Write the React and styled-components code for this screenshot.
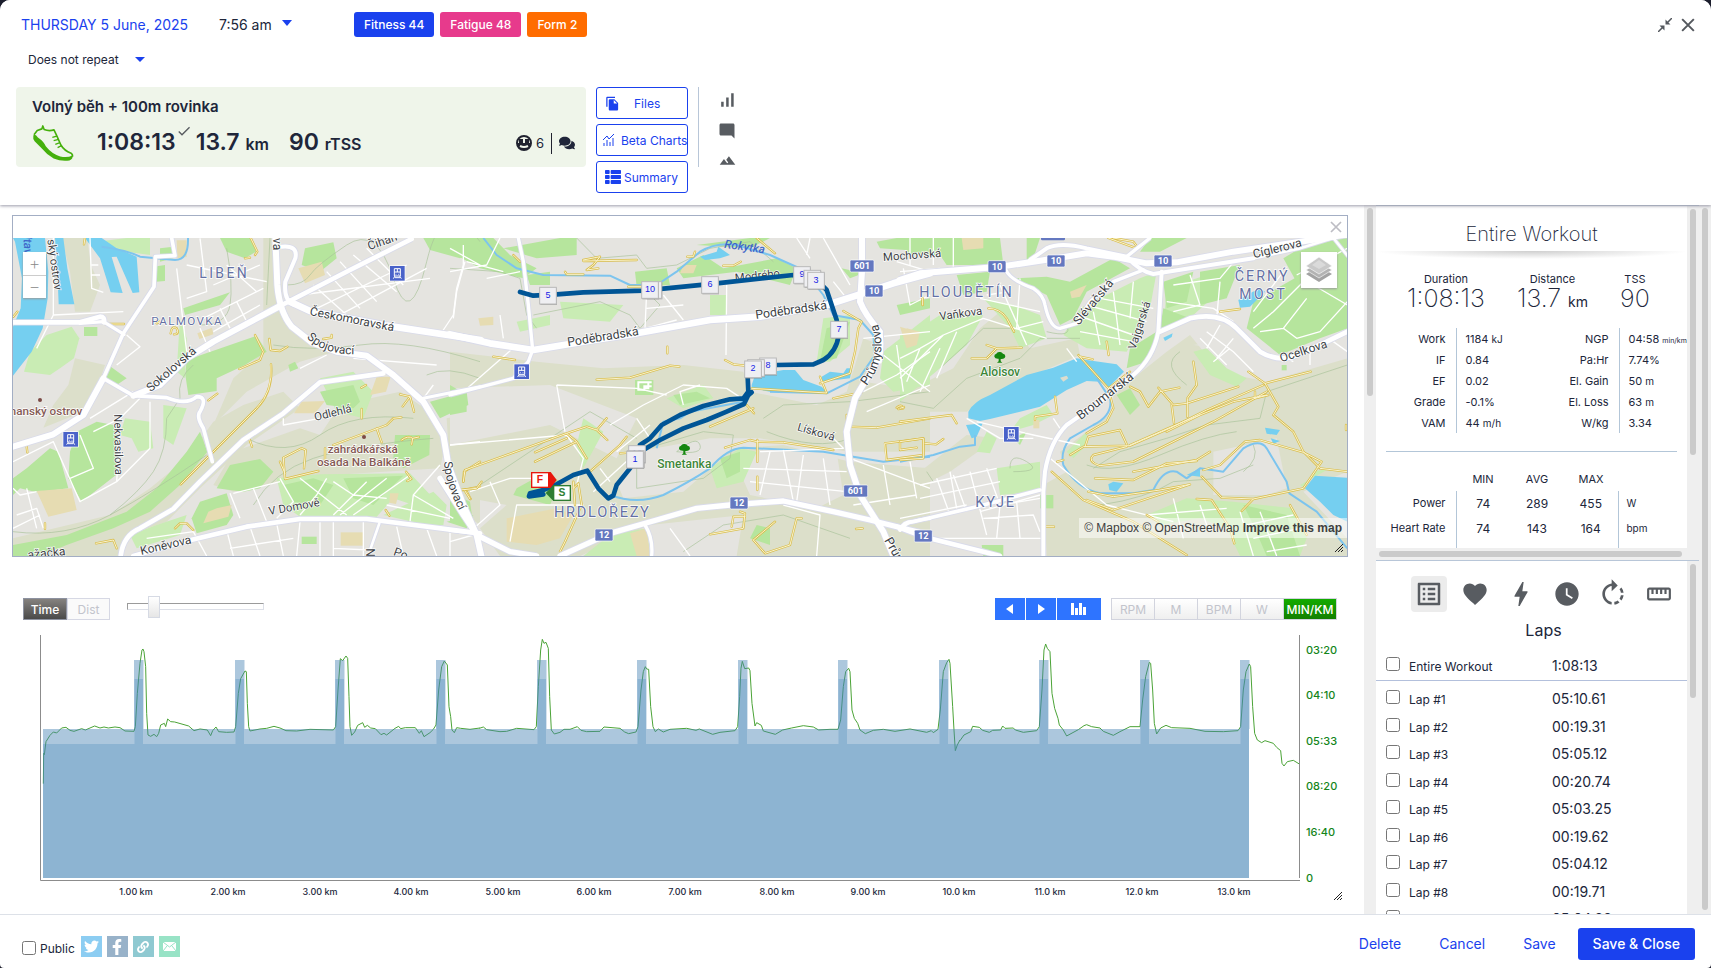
import { useState } from 'react'
import styled, { createGlobalStyle } from 'styled-components'
import {
  MdFileCopy,
  MdSignalCellularAlt,
  MdModeComment,
  MdLandscape,
  MdListAlt,
  MdFavorite,
  MdBolt,
  MdWatchLater,
  MdRotateRight,
  MdStraighten,
  MdCheck,
} from 'react-icons/md'
import { FaThList, FaComments, FaTwitter, FaFacebookF, FaLink } from 'react-icons/fa'

// Map geometry. The map is cut in three tiles, every tile has its own origin (x) and
// the same list of layers. Layers are drawn one by one over all the tiles.
const tiles = [
  {
    x: 0,
    hill: [
      'M185 99 H262 L272 180 L300 240 L270 320 L225 320 L210 200 Z',
      'M225 460 L315 480 L300 525 L250 620 L130 668 L160 600 L205 540 Z',
      'M39 1000 L330 930 L450 850 L560 760 L640 650 L730 600 L850 560 L900 610 L740 720 L600 850 L500 950 L400 985 L360 1053 H39 Z',
      'M700 740 L900 670 L960 690 L1020 600 L1200 560 L1290 620 L1340 700 L1320 790 L1150 800 L1000 810 L840 830 L700 860 L640 840 Z',
      'M1340 640 L1440 620 V960 L1400 930 L1350 800 Z',
      'M790 99 H830 L850 300 L900 400 L1040 430 L900 470 L740 560 L640 660 L700 520 L790 440 Z',
    ],
    lightPark: [
      'M72 500 L90 440 L140 390 L215 365 L238 400 L222 460 L180 490 L150 510 Z',
      'M375 640 L450 650 L460 730 L415 740 L395 700 L360 690 Z',
      'M540 340 L560 400 L555 520 L530 500 Z',
      'M290 110 L380 99 H450 V150 L380 140 Z',
      'M830 820 L960 808 L1230 805 L1300 880 L1240 900 L1180 880 L1130 935 L900 935 L850 900 Z',
      'M390 990 L470 960 L560 930 L540 990 L410 1030 Z',
      'M1150 930 L1300 860 L1340 900 L1330 960 L1280 960 Z',
      'M110 800 L180 780 L190 850 L120 860 Z',
      'M490 600 L560 610 L520 720 L490 700 Z',
      'M960 520 L1060 500 L1120 560 L1090 640 L1010 620 Z',
    ],
    park: [
      'M560 465 L770 392 L800 440 L735 480 L650 520 L650 558 L565 570 L556 510 Z',
      'M660 99 H755 L768 140 L735 160 L680 140 Z',
      'M460 185 L495 180 L495 228 L468 230 Z',
      'M252 366 h40 v27 h-40 Z',
      'M39 820 L80 790 L150 730 L175 740 L205 850 L110 862 L60 850 L39 870 Z',
      'M210 740 L230 680 L290 650 L340 660 L350 700 L348 810 L245 890 L205 820 Z',
      'M39 1020 L200 990 L380 920 L470 850 L560 740 L600 680 L622 740 L540 840 L450 920 L340 970 L200 1020 L120 1053 H39 Z',
      'M690 780 L780 762 L820 800 L780 850 L730 860 L650 850 Z',
      'M575 940 L600 890 L680 865 L700 930 L680 960 L590 985 Z',
      'M850 840 L940 820 L1000 840 L960 900 L880 890 Z',
      'M1030 820 L1210 812 L1160 860 L1120 900 L1060 880 Z',
      'M550 310 L690 262 L660 300 L555 330 Z',
      'M915 130 L1000 112 L1010 160 L960 200 L905 180 Z',
      'M1270 99 H1440 V130 L1380 160 L1290 135 Z',
      'M960 560 L1060 540 L1080 590 L1060 610 L980 600 Z',
      'M1185 690 L1290 690 L1288 750 L1210 790 L1180 760 Z',
      'M1290 590 L1400 560 L1405 600 L1320 640 Z',
      'M325 480 L380 520 L350 540 L315 520 Z',
      'M865 480 L885 470 L895 490 L870 500 Z',
      'M905 995 h45 v22 h-45 Z',
      'M1340 950 L1420 930 L1400 970 Z',
      'M480 130 L520 125 L520 160 L480 170 Z',
    ],
    sand: [
      'M110 858 L215 850 L230 915 L145 935 Z',
      'M895 190 L965 170 L975 210 L915 235 Z',
      'M592 385 L636 368 L640 388 L598 402 Z',
      'M1130 515 L1172 515 L1158 560 L1110 570 Z',
      'M905 590 L975 588 L945 625 L882 625 Z',
      'M1022 982 h68 v40 h-68 Z',
      'M530 106 h30 v50 l-28 4 Z',
      'M650 910 L695 900 L685 935 L610 955 L625 920 Z',
      'M1170 865 l26 0 l-8 32 l-20 -4 Z',
    ],
    water: [
      'M39 99 H135 L145 200 L143 280 L128 370 L95 440 L39 512 V365 L62 310 L66 220 L45 110 Z',
      'M165 99 H190 L202 190 L223 298 H176 L172 200 Z',
      'M255 99 H305 L350 130 L410 155 L418 262 L398 264 L350 155 L335 156 L368 264 L332 262 L300 160 Z',
    ],
    stream: ['M305 125 Q380 135 420 155 L525 165 Q566 165 564 99'],
    path: [
      'M580 480 Q530 520 540 580 L500 640 Q500 740 460 800 T330 930',
      'M680 130 Q700 240 690 300 T600 360',
      'M860 240 Q910 240 930 210 T1040 120 T1180 220 T1280 170 T1440 110',
      'M1280 510 Q1340 480 1440 520',
      'M740 700 Q860 760 960 690 T1240 640',
      'M39 980 Q200 1000 330 930 T620 750',
      'M760 900 Q820 800 940 760 T1300 700',
      'M800 300 L810 99 M820 420 Q940 440 1080 420 T1440 470',
    ],
    street: [
      'M160 330 L370 320 M160 99 V330 L110 430 M270 99 L275 250 L310 262',
      'M275 180 L295 180 M275 210 L300 210 M530 190 L560 440',
      'M560 180 L800 230 M600 100 L620 260 L560 280 M680 180 L770 260 M640 240 L780 180',
      'M610 340 L790 250 M640 380 L780 300 M600 370 L630 440 M660 310 L690 370 M710 290 L740 350',
      'M940 240 L1040 330 M980 200 L1080 310 M1020 170 L1130 290 M1060 150 L1190 260 M1100 130 L1210 240',
      'M930 320 L1220 180 M900 270 L1290 220 M1000 340 L1280 190',
      'M1390 120 V180 L1370 250 L1360 330 M1360 330 L1320 390',
      'M270 640 L400 560 M280 680 L360 640 L420 580 M380 390 L420 425 L350 480',
      'M39 770 L160 710 L240 890 L350 830 L360 680 M240 690 L280 790 L210 820 M350 830 L450 730 L450 590',
      'M39 850 L60 870 L110 860 M50 930 L110 910 L130 970 M39 970 L120 930 M80 850 L110 970',
      'M850 640 V660 L960 640 M1060 460 L1310 480 M900 490 L980 450',
      'M690 865 L720 940 M700 865 L840 830 M760 850 L800 950 M840 820 L880 890 L830 940',
      'M900 820 L1040 930 M980 820 L950 870 L900 930 M1000 830 L1060 870 L1160 880 M1100 830 L1000 930',
      'M1160 820 L1020 930 M1230 810 L1060 930 M1320 780 L1240 870 L1360 940 M1160 900 L1350 940 M1240 870 L1230 950',
      'M440 1000 L580 980 L620 1053 M680 975 L700 1053 M750 965 L780 1053 M830 955 L850 1053 M900 950 L890 1053 M690 1030 L880 1000 M960 945 V1053 M1000 945 V1053 M1090 945 V1053 M1000 1030 L1110 1035 M1190 965 L1210 1053 M1280 970 L1310 1053 M1350 980 V1053',
      'M1350 720 L1440 710 M1270 580 L1300 540',
    ],
    track: [
      'M765 390 L790 440 L780 465 L718 492 M808 402 L812 435 L840 438 L862 425',
      'M813 478 Q820 560 770 610 L650 730 L542 838 M625 586 L652 566',
      'M1000 720 L1160 660 L1180 640 L1204 637 M1130 670 L1145 712 M975 730 V780 M1085 612 V640',
      'M850 758 L905 730 L917 735 L912 790 M850 760 L855 822 L955 798 M855 805 L840 770 M1205 705 Q1225 690 1238 700 L1235 718 M1238 700 L1256 696',
      'M1200 568 L1230 575 L1242 620 M1230 575 L1208 604 M1390 830 L1392 800 L1440 770 M1375 858 L1440 845 M1400 860 L1412 882',
      'M255 99 L252 118 M752 99 L772 140 L765 150 M735 160 L750 158',
      'M288 1015 L340 1005 L350 1030 M525 970 L540 955 L560 955 L580 975 M80 725 L82 742 M315 357 H372 M470 355 L480 350 M40 335 L52 320 M512 385 Q515 360 530 370 Q540 388 522 388 M970 402 L995 398 L995 390 M748 702 L756 725 M1218 800 L1234 822 L1222 828 M1157 915 L1168 932 M135 955 V972 M1084 548 L1098 540',
    ],
    road: [
      [14, 'M39 352 H240 L300 335 Q315 335 312 352'],
      [10, 'M240 355 L310 350 L372 388'],
      [18, 'M39 725 L160 688 L250 630 L310 520'],
      [11, 'M310 520 L370 385 L462 245 L466 155 L525 152 L515 99'],
      [11, 'M310 520 L400 572 L500 578 Q560 602 590 575 Q625 575 600 620 Q588 635 610 670 L637 770'],
      [18, 'M400 572 L480 540 L560 460 L640 410 L840 303'],
      [14, 'M840 303 L1050 195 L1235 102'],
      [18, 'M826 99 L832 240 Q838 320 875 365 L935 412 L1010 440 L1100 452 L1180 510 L1270 590 L1330 690 L1345 780 L1390 900 L1430 990 L1444 1053'],
      [12, 'M845 125 Q895 120 886 160 L856 230 Q850 290 885 300'],
      [20, 'M870 290 L930 318 L1160 362 L1442 405'],
      [14, 'M362 1053 Q370 990 420 970 L520 912 L600 830 L730 705 L850 625 L960 532 L1150 505'],
      [14, 'M400 1053 L560 1008 L740 965 L900 942 L1100 942 L1440 985'],
      [9, 'M1270 580 L1440 545'],
      [8, 'M1138 955 L1112 1030'],
    ],
  },
  {
    x: 1350,
    hill: [
      'M0 440 L260 470 L460 490 L700 480 L880 500 L900 560 L1100 600 L1190 560 L1240 400 L1290 420 L1240 530 L1440 560 V740 L1200 740 L930 700 L780 700 L560 740 L500 830 L520 880 L700 860 L850 730 L1000 720 L1200 770 L1440 790 V1053 H860 L880 930 L600 960 L390 1053 H150 L90 970 L170 900 L60 880 L0 760 Z',
      'M160 940 L320 900 L390 920 L330 1020 L180 1000 Z',
    ],
    land: [
      'M0 550 L300 540 L560 640 L500 760 L300 660 L0 720 Z',
      'M930 730 L1160 740 L1180 870 L1100 910 L900 870 L860 780 Z',
      'M610 990 L700 960 L760 1053 H610 Z',
    ],
    lightPark: [
      'M200 350 L300 330 L300 360 L210 380 Z',
      'M1300 440 L1440 330 V540 L1330 560 L1290 520 Z',
      'M330 290 L520 300 L480 350 L340 340 Z',
      'M780 270 h50 v60 h-50 Z',
      'M400 640 L460 680 L400 790 L380 720 Z',
      'M1120 340 L1200 330 L1200 420 L1140 470 L1100 470 Z',
      'M480 990 L590 970 L600 1053 H400 Z',
      'M1310 430 L1440 400 V440 L1320 470 Z',
      'M870 730 L920 740 L880 830 L800 850 L780 790 Z',
      'M650 580 L760 540 L790 580 L700 610 Z',
    ],
    park: [
      'M0 99 H130 L180 150 L260 190 L220 220 L90 190 L0 140 Z',
      'M160 130 L330 99 H380 V150 L260 160 Z',
      'M555 200 L650 190 L660 240 L560 245 Z',
      'M680 190 L760 150 L820 190 L980 160 L1040 190 L1020 240 L860 200 L700 220 Z',
      'M740 120 L900 99 H960 L900 130 Z',
      'M1280 110 L1340 99 H1440 V140 L1290 130 Z',
      'M1175 190 L1240 205 L1200 220 Z',
      'M555 525 h55 v45 h-55 Z',
      'M0 540 L50 570 L50 620 L0 630 Z',
      'M810 760 L870 740 L870 800 L830 820 Z',
      'M200 850 L290 800 L330 830 L300 900 L190 870 Z',
      'M1130 370 L1200 350 L1160 460 L1110 470 Z',
      'M220 980 L270 940 L310 990 L260 1010 Z',
      'M0 860 L60 890 L70 960 L0 950 Z',
      'M920 960 L960 970 L960 1020 L900 1000 Z',
      'M670 570 L740 560 L780 580 L690 600 Z',
      'M1340 300 L1440 280 V310 L1350 330 Z',
      'M230 210 L300 200 V240 L240 240 Z',
    ],
    sand: [
      'M170 940 L320 910 L370 930 L330 1000 L260 1020 L170 1010 Z',
      'M1350 365 L1400 380 L1400 420 L1370 430 Z',
      'M540 985 L590 970 L600 1053 H560 Z',
      'M85 340 L130 335 L130 360 L90 362 Z',
      'M700 180 L740 180 L730 205 L690 205 Z',
    ],
    water: [
      'M905 540 L915 510 L1000 495 L1035 495 L1060 525 L1115 545 L1130 560 L960 560 L905 550 Z',
      'M1115 515 L1140 500 L1180 505 L1190 490 L1206 490 L1200 520 L1115 530 Z',
      'M750 155 L800 140 L805 125 L840 150 L810 160 L765 165 Z',
    ],
    stream: [
      'M100 99 L140 150 L200 190 L280 210 L480 212 L540 240 L620 240 L680 200 L750 140 Q800 110 860 120 L960 150 L1060 195 L1120 270 L1150 330 L1230 345 L1270 390 L1275 450 L1230 515 L1130 565 L960 560',
      'M620 730 L640 650 L690 640 L720 620 L880 590',
      'M480 870 Q560 900 640 870 Q720 830 780 790 Q830 730 880 728 L1120 740 L1300 770 L1440 755',
    ],
    path: [
      'M380 99 L440 160 L560 150 L590 190 L680 180 L780 130 L900 110 L970 170',
      'M0 190 L150 200 L210 220 L230 330 L260 370',
      'M250 330 L450 290 L540 330 L570 370 L630 300 L600 270',
      'M560 780 L590 730 L760 680 L850 690 L840 760 L760 820 L560 850 Z',
      'M60 860 L300 700 L420 620 L560 700',
      'M940 640 L1000 600 L1200 590 L1440 560 M950 680 Q1100 740 1200 700',
      'M680 740 Q740 690 750 720 T680 740',
      'M700 1040 L820 960 L1000 930 L1200 1000',
    ],
    street: [
      'M0 130 L90 180 M0 200 L110 180 L150 99 M150 330 L160 400 M110 220 L210 200',
      'M45 170 L20 260 L10 340 M50 170 L160 200 M590 260 L585 370 L680 345 M590 310 L700 300 M640 270 L700 345',
      'M830 240 L828 450 M1040 99 L1080 160 M1080 99 L1070 150 M1120 99 L1200 240 M1150 230 L1190 280',
      'M1340 170 L1440 200 M1360 190 L1380 300 L1440 270 M1240 400 L1440 380',
      'M320 540 L345 680 M320 540 L560 550 L650 570 M0 720 L350 690 M350 690 L400 760 L380 840',
      'M480 660 L580 600 L700 540 L830 550 L890 590 M600 700 L560 640 M500 740 L600 660 M700 600 L690 560 L750 540',
      'M60 860 L180 820 L260 820 M120 830 L150 900 L60 980 M0 1010 L70 990 M180 1010 L200 900 L400 900',
      'M930 740 L1180 730 L1150 700 M960 740 L930 870 M1000 735 L1030 890 M1060 750 L1040 890 M900 830 L1190 860 M1120 760 L1140 900 M880 790 L1190 800',
      'M1240 560 L1340 510 L1440 440 M1250 620 L1440 540 M1210 900 L1400 870 M1300 780 L1320 900 M1380 770 L1400 880',
      'M660 970 L720 1053 M1000 900 L1110 930 L1100 1053 M1200 760 L1440 850',
      'M450 790 L480 830 M430 860 L540 760',
      'M200 420 L40 560 M1300 450 L1440 560 M1340 420 L1360 560',
    ],
    track: [
      'M190 150 L210 170 M400 165 L450 155 L430 180 L410 195 L445 190 M400 168 L560 165',
      'M345 200 L350 208 L400 208 M535 245 H575 M920 99 L975 145 M735 140 L730 155 L712 155 M820 182 L850 182 L872 170',
      'M130 455 L195 465 M440 524 L540 518 L660 482 L688 485 M825 465 L850 478 L885 482 M652 425 V445',
      'M905 550 L1130 564 L1110 515 M1110 535 L1200 505 L1215 440 L1225 370 L1235 350 L1180 318 M1150 580 L1235 562',
      'M40 830 L45 795 L350 685 L410 665 L440 675 L470 640 M440 675 L472 705 M255 770 L380 710 L350 685 M255 742 L350 700 M380 710 L410 760',
      'M30 855 L80 850 L95 830 M45 858 L60 882 M370 850 L385 835 L395 900 L345 1010 L330 1040 M420 800 L510 720 L530 695 M510 745 L570 740',
      'M370 830 L375 900 M780 665 L910 610 M890 600 L912 625 M1190 630 L1192 665 L1280 668 L1440 640',
      'M825 728 L900 705 L920 710 L1000 712 L1150 735 M922 705 V770 M922 815 V855 M1305 715 L1420 700 V750 L1310 765 Z M1350 710 V735 L1400 728',
      'M780 988 L880 970 L885 925 L870 920 M845 965 L850 935 L885 935 M910 1005 L975 950 M910 1005 L945 1045 L1020 1020 L1040 940 L1055 940 M1340 608 Q1355 595 1360 610 L1345 612 M1218 972 L1238 970 M1418 282 V300',
    ],
    road: [
      [20, 'M-2 388 L120 415 L250 435 L400 410 L560 385 L780 345 L930 335 L1130 300 L1230 268 L1330 235 L1440 205'],
      [18, 'M1236 99 V200 L1230 290 Q1245 330 1290 380 L1280 470 L1215 580 L1190 680 L1200 780 L1230 870 L1300 980 L1330 1053'],
      [10, 'M205 99 L220 170 L235 300 L248 435 L235 470 L190 520 L0 570'],
      [16, 'M-30 820 L40 930 L80 990 L180 1040 L260 1053 M330 1053 L480 985 L620 945 L740 910 L840 900 L1000 888 L1150 920 L1260 945 L1440 990'],
      [12, 'M0 975 L80 985'],
      [10, 'M585 960 Q610 1000 605 1053 M1360 970 Q1360 950 1440 940'],
      [11, 'M1290 380 Q1300 410 1290 470'],
    ],
  },
  {
    x: 2700,
    hill: [
      'M0 570 L160 490 L240 370 L300 320 L390 430 L530 400 L540 450 L330 540 L200 620 L0 620 Z',
      'M700 520 L800 440 L870 390 L960 500 L1100 530 L1342 460 V800 L1270 830 L1210 860 L1342 1000 V1053 H440 L430 840 L500 800 L480 740 L560 680 L640 620 L640 560 Z',
      'M60 800 L200 690 L290 700 L150 800 L90 830 Z',
    ],
    land: [
      'M560 560 L620 600 L600 640 L520 660 L460 700 L440 720 L420 800 L300 690 L240 650 L440 600 Z',
      'M880 420 L1040 400 L1140 480 L1340 450 V420 L1200 450 Z',
      'M940 740 L1130 700 L1160 850 L1100 870 L940 870 Z',
    ],
    lightPark: [
      'M0 390 L60 370 L120 330 L250 330 L200 420 L120 490 L0 590 Z',
      'M490 390 L540 310 L720 220 L770 200 L750 310 L680 440 L560 430 Z',
      'M880 440 L920 430 L980 490 L1040 520 L1010 545 L930 510 Z',
      'M360 640 L440 600 L460 630 L400 660 L330 680 Z',
      'M230 740 L260 680 L290 700 L270 745 Z',
      'M290 790 L420 770 L420 860 L300 870 Z',
      'M500 740 L560 680 L560 720 L520 760 Z',
      'M740 930 L860 880 L1000 890 L1180 910 L1220 1000 L1200 1053 H1020 L980 970 L900 940 L780 960 Z',
      'M800 250 L920 210 L980 240 L880 330 L790 370 Z',
      'M1215 850 L1240 800 L1290 790 L1200 840 Z',
      'M250 280 L340 300 L420 330 L440 400 L360 430 L330 370 Z',
    ],
    park: [
      'M0 110 L80 99 H300 L310 180 L140 180 L120 150 L30 150 Z',
      'M380 99 H420 L400 160 L380 165 Z',
      'M170 210 L270 200 L260 260 L190 270 Z',
      'M340 220 L440 215 L510 230 L640 160 L690 190 L560 260 L520 340 L480 360 L440 270 Z',
      'M750 99 H860 L780 140 L720 140 Z',
      'M790 230 L880 200 L860 290 L800 310 Z',
      'M900 200 L1020 180 L980 280 L900 300 Z',
      'M1060 290 L1342 130 V370 L1260 400 L1140 450 L1040 370 Z',
      'M1150 160 L1250 99 H1342 V140 L1200 250 Z',
      'M690 430 L770 380 L740 470 L680 490 Z',
      'M790 310 L870 340 L780 370 Z',
      'M650 570 L690 550 L720 600 L690 630 Z',
      'M1030 900 L1160 930 L1200 1053 H1100 L1060 960 Z',
      'M245 1020 L310 1020 V1053 H250 Z',
      'M420 870 h40 v40 h-40 Z',
      'M1145 480 h15 v16 h-15 Z',
      'M340 700 L380 680 L360 720 Z',
    ],
    sand: [
      'M185 99 H250 V130 L190 135 Z',
      'M20 370 L60 380 L50 420 L20 425 Z',
      'M510 260 L560 240 L540 275 L515 280 Z',
      'M400 645 h18 v25 h-18 Z',
    ],
    water: [
      'M205 620 Q220 590 270 570 L380 510 L460 488 L530 460 L560 465 L650 478 L672 500 L625 548 L600 530 L560 528 L500 555 L420 605 L360 620 L270 642 L240 648 L205 640 Z',
      'M198 660 L248 655 L230 695 L215 700 Z',
      'M1215 850 L1245 812 L1342 818 V950 L1300 930 L1260 890 Z',
      'M625 838 L640 830 L670 835 L650 860 L628 855 Z',
      'M1015 285 L1050 265 L1080 250 L1095 260 L1050 305 L1020 308 Z',
      'M1095 668 L1140 675 L1130 690 L1100 686 Z M1112 700 L1140 708 L1120 716 Z',
      'M790 398 L818 385 L815 396 L795 408 Z',
      'M860 810 L900 790 L900 815 Z',
    ],
    stream: [
      'M590 520 L630 580 Q640 630 580 660 L510 700 Q480 740 490 780 Q530 850 600 865 L700 865 L760 855 Q790 790 830 800 L860 820 L900 790 L970 800 L1030 730 Q1080 700 1100 730 L1160 830 L1168 865 L1250 920 L1342 1030',
      'M0 770 L100 750 L180 725 L225 720 L225 690',
    ],
    path: [
      'M0 590 L100 610 L200 520 L360 460 L420 400 L540 400',
      'M120 490 L250 370 L330 370 M440 380 Q520 400 500 360',
      'M580 790 L660 740 L800 700 L920 660 L1080 640 L1100 560 L1342 480',
      'M560 780 Q640 810 780 750 T1010 680',
      'M1030 800 Q1080 760 1060 720 M860 540 Q780 480 840 440',
      'M600 900 Q740 880 820 830 L960 820 L1060 780',
      'M330 790 Q330 740 380 770 T340 800 M80 800 L100 830',
    ],
    street: [
      'M0 460 L60 430 L130 390 L250 340 M20 530 L60 430 M60 560 L120 430 M110 520 L170 380 M0 520 L130 390',
      'M240 280 L420 320 M250 340 L440 400 M300 240 L380 420 M260 270 L330 260 M360 220 L350 370 L430 350',
      'M530 330 L700 390 M540 380 L700 410 M560 300 L740 350 M600 280 L760 310 M580 320 L600 420 M640 260 L660 420 M700 230 L690 340',
      'M820 240 L960 220 L1010 160 M870 210 L900 300 L820 320 M800 290 L940 310 L1000 350 M960 230 L950 340',
      'M1060 370 L1120 320 L1240 200 M1080 380 L1150 370 L1220 280 M1060 320 L1150 200 M1150 370 L1190 400 L1260 380 L1342 290 M1240 240 L1342 300 M1190 210 L1342 130',
      'M920 380 L1000 440 L1060 500 M900 400 L980 480 M960 360 L920 430 M1000 400 L950 460 M940 470 L990 430',
      'M60 840 L290 790 M60 880 L300 830 M110 820 L150 930 M160 810 L200 920 M210 800 L260 990 M0 940 L200 900 M260 790 L300 900 L420 880 M150 800 L170 910 M240 920 L420 870 M250 940 L400 930 L420 980 M300 900 L290 1000 M350 890 L360 1000 M80 1000 L430 1000',
      'M740 930 L980 910 M820 880 L850 1000 M900 900 L920 960 M1020 920 L1060 1053 M1080 920 L1130 1053 M1040 960 L1180 930 M1060 1000 L1200 970 M1100 1040 L1220 1020',
      'M200 640 L300 700 L400 700 M0 200 L120 190 M100 99 V180 M160 99 V190 M30 99 V180 M530 470 L500 430',
      'M1140 450 L1180 470 M1300 410 L1342 440 M1230 430 V480 M540 720 L400 690 L230 650 M460 640 L480 670',
      'M450 760 L620 900 L820 950',
    ],
    track: [
      'M265 310 Q300 310 320 340 L342 380 M215 460 L260 460 L290 430 L365 428 M260 420 L290 430 L270 450',
      'M535 450 L625 550 L690 500 M540 455 L578 463 M620 410 L626 450 M960 320 L1020 312 M625 550 L640 610 L620 650 L560 685',
      'M690 545 L720 560 L745 605 L780 560 L838 548 M775 548 L820 600 L860 595 L1015 545 M815 600 L822 655 M880 470 L890 540 L862 580 V635',
      'M1045 500 L1095 535 L1232 500 M1095 535 L1135 605 L1120 630 L1180 680 L1210 740 L1260 790 L1342 800 M1065 560 V580 L1105 570',
      'M510 750 L550 725 L690 722 L820 665 L920 615 L1090 540 M690 720 L850 650 L1000 590 L1100 570 M555 725 L565 695 L660 675 L680 718',
      'M930 740 L890 765 L700 800 M800 680 L900 630 M1100 560 L940 650 L700 770 L600 782 Q560 770 580 750 L680 725',
      'M585 820 L700 825 L800 775 L890 768 M455 800 L550 885 L700 950 L860 1050 M565 860 L640 875 L780 855 L870 838 M560 885 L640 915 L870 838',
      'M905 815 L965 878 L1060 882 L1210 850 L1265 770 L1210 742 L1080 705 L1035 710 L960 780 L910 795 M890 882 L935 885 L990 970 L1003 1015 M1025 918 L1060 882 M1170 900 L1220 990',
      'M740 930 L775 950 M438 965 L462 965 M0 650 L155 630 L170 655 M0 710 L70 700 V760 L0 765 M75 715 L108 718 L130 702 M465 575 L472 625 L405 635 V645 M0 610 L12 606 M68 280 V300 M625 99 L710 130 M640 99 L700 110 L715 130 M472 770 L490 765 M1338 660 V675',
    ],
    road: [
      [18, 'M-2 225 L60 205 L300 185 L390 172 L470 160 L560 145 L640 155 L740 175 L830 172 L1000 140 L1250 103 L1342 88'],
      [12, 'M390 165 L440 130 Q480 110 560 130 L680 155 Q720 200 760 207 L1060 160'],
      [10, 'M680 155 L750 99'],
      [10, 'M318 195 Q330 225 400 250 Q430 270 435 300 Q450 370 480 370 L530 355 L570 290 L640 230 L730 195'],
      [12, 'M785 200 L775 380 Q760 460 700 510 L600 590 L500 660 Q450 710 435 800 L430 860 L430 1053'],
      [14, 'M780 380 L870 340 Q960 320 1010 370 L1080 440 Q1130 470 1180 455 L1280 410 L1342 380'],
      [8, 'M1060 160 L1200 130 L1300 99 L1345 155'],
      [11, 'M420 855 L230 905 L40 950 Q10 950 0 975'],
      [14, 'M-10 965 L70 995 L250 1040 L300 1053'],
    ],
  },
]

const fills = [
  ['land', '#e5e4e0'],
  ['lightPark', '#c9ecb4'],
  ['park', '#b6e59d'],
  ['sand', '#e6dcb2'],
  ['water', '#75cff0'],
]

// text, x, y, angle, size
const streetLabels = [
  ['Čihan', 1108, 136, -20, 36],
  ['Sokolovská', 452, 562, -41, 36],
  ['Odlehlá', 946, 648, -14, 34],
  ['Nekvasilova', 342, 628, 89, 34],
  ['V Domově', 808, 930, -10, 34],
  ['Koněvova', 424, 1050, -13, 36],
  ['ský ostrov', 142, 104, 82, 34],
  ['va', 818, 99, 90, 36],
  ['ažačka', 84, 1062, -6, 36],
  ['N', 1098, 1030, 90, 36],
  ['Po', 1178, 1050, 20, 36],
  ['Modrého', 2206, 230, -6, 34],
  ['Poděbradská', 1704, 424, -9, 37],
  ['Poděbradská', 2268, 342, -8, 37],
  ['Mochovská', 2650, 168, -4, 34],
  ['Lísková', 2390, 676, 16, 34],
  ['Prům', 2652, 1006, 60, 38],
  ['Vaňkova', 2820, 346, -8, 34],
  ['Slévačská', 3236, 362, -50, 37],
  ['Vajgarská', 3406, 436, -72, 34],
  ['Cíglerova', 3762, 160, -14, 36],
  ['Ocelkova', 3844, 472, -18, 36],
  ['Broumarská', 3242, 646, -38, 38],
]

// text, x, y, size
const districtLabels = [
  ['LIBEŇ', 598, 219, 42, 7],
  ['PALMOVKA', 454, 360, 35, 4],
  ['HRDLOŘEZY', 1662, 936, 44, 5],
  ['HLOUBĚTÍN', 2758, 276, 43, 6],
  ['KYJE', 2926, 906, 44, 5],
  ['ČERNÝ', 3704, 228, 43, 6],
  ['MOST', 3718, 282, 42, 7],
]

const shields = [
  ['601', 2586, 183],
  ['10', 2622, 258],
  ['12', 2217, 894],
  ['12', 1812, 990],
  ['601', 2567, 858],
  ['12', 2770, 993],
  ['10', 2991, 185],
  ['10', 3168, 168],
  ['10', 3489, 168],
]

const stations = [
  [1192, 205],
  [212, 703],
  [1565, 500],
  [3034, 688],
]

const kilometers = [
  ['9', 2380, 184],
  ['', 2411, 195],
  ['3', 2422, 201],
  ['5', 1618, 246],
  ['', 1934, 229],
  ['10', 1924, 229],
  ['6', 2104, 214],
  ['7', 2491, 348],
  ['8', 2278, 458],
  ['', 2242, 463],
  ['2', 2233, 467],
  ['12', 1885, 721],
  ['', 1881, 736],
  ['1', 1879, 738],
]

const route =
  'M1560 261 L1600 272 L1670 268 L1750 262 L1930 257 L2150 235 L2380 210 L2450 225 L2480 255 L2510 345 L2516 390 Q2510 440 2470 465 L2440 478 L2330 480 L2250 495 L2243 515 L2245 560 L2230 580 L2190 583 L2110 603 L2040 630 L1985 660 L1950 700 L1920 720 L1930 735 L1980 705 L2050 670 L2120 645 L2180 620 L2232 597 L2245 570 L2255 562 L2240 575 M1930 725 L1890 790 L1850 840 L1840 872 L1825 880 L1795 850 L1762 797 L1720 810 L1670 838 L1630 855 L1590 865 L1587 874 L1630 868'

// Pace line of the chart, in three parts
const paceParts = [
  {
    x: 0,
    y: 0,
    d: 'M130 611 L131 520 L133 524 L138 485 L150 466 L160 456 L170 459 L185 444 L198 442 L210 451 L222 454 L245 446 L256 450 L284 438 L300 444 L312 441 L325 444 L345 441 L360 443 L375 453 L402 454 L406 440 L412 340 L420 250 L426 210 L429 207 L432 215 L437 260 L440 400 L444 465 L452 469 L462 463 L470 470 L476 460 L482 435 L493 430 L497 440 L503 417 L512 425 L524 426 L566 438 L582 452 L600 447 L622 450 L632 467 L638 452 L648 441 L656 455 L680 457 L702 456 L707 440 L715 340 L722 296 L735 273 L739 275 L742 370 L746 440 L750 453 L780 447 L800 445 L822 439 L840 444 L858 452 L890 453 L930 448 L1000 450 L1007 440 L1014 330 L1021 236 L1028 242 L1038 228 L1043 235 L1047 350 L1050 440 L1055 466 L1064 456 L1073 436 L1088 428 L1094 442 L1102 436 L1112 444 L1126 446 L1143 464 L1152 460 L1160 465 L1185 445 L1196 439 L1202 446 L1216 443 L1246 443 L1258 460 L1264 452 L1272 470 L1290 458 L1300 448 L1308 435 L1316 330 L1325 260 L1333 243 L1342 255 L1347 380 L1352 410 L1356 450 L1363 458 L1370 443 L1382 445 L1410 448 L1440 444',
  },
  {
    x: 1410,
    y: 60,
    d: 'M28 385 L40 381 L50 389 L90 395 L110 394 L140 385 L192 389 L199 380 L205 260 L212 150 L217 118 L222 130 L228 127 L235 145 L239 290 L244 390 L253 402 L270 397 L282 388 L300 388 L322 380 L333 391 L350 395 L390 394 L402 381 L450 385 L464 396 L476 401 L498 396 L504 380 L513 270 L520 215 L526 200 L530 207 L536 208 L542 320 L549 380 L556 395 L565 387 L580 396 L600 388 L650 385 L678 391 L688 387 L728 403 L750 397 L795 392 L803 380 L809 290 L813 205 L817 184 L824 206 L836 204 L840 212 L846 310 L855 378 L860 368 L874 376 L880 393 L916 403 L938 390 L965 384 L1000 377 L1030 381 L1046 390 L1080 388 L1104 388 L1112 360 L1120 260 L1127 215 L1136 205 L1140 215 L1146 330 L1153 355 L1163 370 L1170 390 L1186 401 L1210 391 L1240 388 L1275 394 L1320 387 L1370 397 L1384 392 L1390 398 L1404 388 L1411 330 L1420 215 L1430 188 L1437 178 L1440 190 L1448 320 L1452 390 L1456 452 L1462 435 L1470 420',
  },
  {
    x: 2880,
    y: 0,
    d: 'M0 482 L12 465 L32 455 L38 439 L58 442 L68 451 L88 457 L98 451 L122 450 L128 438 L135 445 L160 444 L166 450 L190 457 L230 452 L238 440 L246 330 L252 210 L257 192 L262 205 L270 215 L276 340 L284 385 L294 415 L298 435 L310 450 L320 468 L355 449 L372 437 L380 434 L395 440 L420 444 L430 454 L460 466 L480 455 L510 440 L540 440 L548 360 L557 290 L568 247 L572 250 L578 330 L583 430 L590 462 L602 444 L618 436 L635 443 L690 445 L735 454 L790 455 L834 452 L842 440 L850 330 L858 275 L868 252 L872 260 L878 380 L884 460 L892 480 L905 488 L915 482 L940 490 L950 502 L962 512 L966 550 L972 558 L982 545 L1000 541 L1018 552',
  },
]

const intervalStarts = [134, 235, 335, 436, 537, 637, 738, 838, 939, 1039, 1140, 1240]

const distanceTicks = [
  ['1.00 km', 136],
  ['2.00 km', 228],
  ['3.00 km', 320],
  ['4.00 km', 411],
  ['5.00 km', 503],
  ['6.00 km', 594],
  ['7.00 km', 685],
  ['8.00 km', 777],
  ['9.00 km', 868],
  ['10.0 km', 959],
  ['11.0 km', 1050],
  ['12.0 km', 1142],
  ['13.0 km', 1234],
]

const paceTicks = [
  ['03:20', 654],
  ['04:10', 699],
  ['05:33', 745],
  ['08:20', 790],
  ['16:40', 836],
  ['0', 882],
]

const leftStats = [
  ['Work', '1184', 'kJ'],
  ['IF', '0.84'],
  ['EF', '0.02'],
  ['Grade', '-0.1%'],
  ['VAM', '44', 'm/h'],
]

const rightStats = [
  ['NGP', '04:58', 'min/km'],
  ['Pa:Hr', '7.74%'],
  ['El. Gain', '50', 'm'],
  ['El. Loss', '63', 'm'],
  ['W/kg', '3.34'],
]

const laps = ['05:10.61', '00:19.31', '05:05.12', '00:20.74', '05:03.25', '00:19.62', '05:04.12', '00:19.71', '05:04.88']

// name, icon, icon size
const panelTabs = [
  ['Laps', MdListAlt, 30],
  ['Heart rate', MdFavorite, 28],
  ['Power', MdBolt, 32],
  ['Pace', MdWatchLater, 28],
  ['Cadence', MdRotateRight, 32],
  ['Distance', MdStraighten, 26],
]

const Shoe = () => (
  <svg width="42" height="38" viewBox="62 132 128 114">
    <path
      d="M68 164 L78 151 L92 146 L95 137 L99 148 Q114 154 129 149 L138 168 L150 195 Q160 212 181 220 Q187 224 185 231"
      fill="none"
      stroke="#45b00c"
      strokeWidth="5"
      strokeLinejoin="round"
    />
    <path
      d="M66 166 Q72 160 80 172 Q98 184 104 199 Q122 222 148 230 Q170 235 185 227 Q188 238 176 242 Q152 246 128 236 Q106 224 92 206 L70 184 Q64 176 66 166 Z"
      fill="#45b00c"
    />
    <path d="M138 168 L124 172 M143 178 L128 182 M147 188 L133 193 M152 197 L140 203" stroke="#45b00c" strokeWidth="4" />
  </svg>
)

const BetaChart = () => (
  <svg width="14" height="14" viewBox="0 0 14 14" fill="none" stroke="currentColor">
    <path d="M1 7 L5 3 L7 6 L12 1 M2 13 V10 M5 13 V7 M8 13 V9 M11 13 V5" />
  </svg>
)

const Smile = () => (
  <svg width="18" height="18" viewBox="0 0 18 18">
    <circle cx="9" cy="9" r="7" fill="#f0f5ea" stroke="#20222f" strokeWidth="2" />
    <path d="M2 9 H16 Q15 16 9 16 Q3 16 2 9 Z M4 5 h4 v4 h-4 Z M10 5 h4 v4 h-4 Z" fill="#20222f" />
    <path d="M5 12 Q9 14 13 12" stroke="#f0f5ea" strokeWidth="2" fill="none" />
  </svg>
)

const Collapse = () => (
  <svg width="14" height="14" viewBox="0 0 14 14" fill="#54585e" stroke="#54585e">
    <path d="M14 0 L9 5 M0 14 L5 9" strokeWidth="1.5" />
    <path d="M7.5 1.500 V6.500 H12.500 Z M6.500 12.500 V7.500 H1.500 Z" stroke="none" />
  </svg>
)

const Cross = ({ size, color }) => (
  <svg width={size} height={size} viewBox="0 0 12 12" stroke={color} strokeWidth="1.7">
    <path d="M1 1 L11 11 M11 1 L1 11" />
  </svg>
)

const Grip = () => (
  <svg width="8" height="8" viewBox="0 0 8 8" stroke="#222">
    <path d="M0 8 L8 0 M3 8 L8 3 M6 8 L8 6" />
  </svg>
)

const Layers = () => (
  <svg width="28" height="28" viewBox="0 0 28 28">
    <path d="M1 18 L14 26 L27 18 L22 15 L14 20 L6 15 Z" fill="#a3a3a3" />
    <path d="M1 14 L14 22 L27 14 L22 11 L14 16 L6 11 Z" fill="#b3b3b3" stroke="#fff" strokeWidth=".6" />
    <path d="M1 10 L14 1 L27 10 L14 18 Z" fill="#c9c9c9" stroke="#fff" strokeWidth=".6" />
    <path d="M7 9 L14 4 L21 9 L14 13 Z" fill="#dadada" />
  </svg>
)

const Station = ({ x, y }) => (
  <g transform={`translate(${x - 24} ${y - 24})`}>
    <rect width="48" height="48" fill="#fff" />
    <rect x="2" y="2" width="44" height="44" fill="#4962c9" />
    <path d="M15 10 H33 V32 H15 Z M12 40 L17 32 M36 40 L31 32 M16 37 H32" fill="none" stroke="#fff" strokeWidth="3" />
    <path d="M24 11 V20 M15 20 H33 M19 27 h2 M27 27 h2" stroke="#fff" strokeWidth="3" />
  </g>
)

const Tree = ({ x, y }) => (
  <path
    transform={`translate(${x} ${y})`}
    d="M-8 16 H8 L3 12 V5 Q16 6 17 -3 Q17 -10 10 -11 Q6 -17 0 -16 Q-7 -17 -10 -11 Q-17 -9 -16 -2 Q-14 5 -3 4 V12 Z"
    fill="#15870f"
  />
)

const RouteMap = () => (
  <MapSvg viewBox="39 99 4002 954" preserveAspectRatio="xMidYMid slice" role="img" aria-label="Route map">
    <rect x="39" y="99" width="4002" height="954" fill="#e5e4e0" />
    {tiles.map((t) => (
      <g key={t.x} transform={`translate(${t.x} 0)`} fill="#dcdfca">
        {t.hill.map((d) => <path key={d} d={d} />)}
      </g>
    ))}
    {fills.map(([layer, color]) =>
      tiles.map((t) => (
        <g key={layer + t.x} transform={`translate(${t.x} 0)`} fill={color}>
          {(t[layer] || []).map((d) => <path key={d} d={d} />)}
        </g>
      ))
    )}
    {tiles.map((t) => (
      <g key={t.x} transform={`translate(${t.x} 0)`} fill="none" strokeLinejoin="round">
        <path d={t.path.join(' ')} stroke="#a9c39a" strokeWidth="2" />
        <path d={t.stream.join(' ')} stroke="#7cc4ee" strokeWidth="6" />
        <path d={t.street.join(' ')} stroke="#fff" strokeWidth="4" />
        <path d={t.track.join(' ')} stroke="#d8bd4c" strokeWidth="7" strokeLinecap="round" />
        <path d={t.track.join(' ')} stroke="#faf3cc" strokeWidth="3" strokeLinecap="round" />
      </g>
    ))}
    {tiles.map((t) => (
      <g key={t.x} transform={`translate(${t.x} 0)`} fill="none" stroke="#d9dbea" strokeLinejoin="round">
        {t.road.map(([w, d]) => <path key={d} d={d} strokeWidth={w + 5} />)}
      </g>
    ))}
    {tiles.map((t) => (
      <g key={t.x} transform={`translate(${t.x} 0)`} fill="none" stroke="#fff" strokeLinejoin="round" strokeLinecap="round">
        {t.road.map(([w, d]) => <path key={d} d={d} strokeWidth={w} />)}
      </g>
    ))}
    <path d="M3180 518 L3200 512 L3205 520 L3190 530 Z" fill="#dcdccd" />
    <path d="M1955 532 h-40 v22 h18 v-10 h22 M1945 530 v20 h-14" fill="none" stroke="#fff" strokeWidth="6" />

    {streetLabels.map(([text, x, y, angle, size]) => (
      <StreetLabel key={text + x} fontSize={size} transform={`translate(${x} ${y}) rotate(${angle})`}>{text}</StreetLabel>
    ))}
    <defs>
      <path id="bendWest" d="M920 398 Q970 450 1070 448" />
      <path id="bendSouth" d="M1332 770 Q1335 840 1385 930" />
      <path id="bendEast" d="M2600 543 Q2665 460 2635 360" />
    </defs>
    <StreetLabel fontSize="36"><textPath href="#bendWest">Spojovací</textPath></StreetLabel>
    <StreetLabel fontSize="36"><textPath href="#bendSouth">Spojovací</textPath></StreetLabel>
    <StreetLabel fontSize="38"><textPath href="#bendEast">Průmyslova</textPath></StreetLabel>
    <StreetLabel fontSize="36" transform="translate(928 330) rotate(11)">Českomoravská</StreetLabel>
    {districtLabels.map(([text, x, y, size, spacing]) => (
      <DistrictLabel key={text} x={x} y={y} fontSize={size} $spacing={spacing}>{text}</DistrictLabel>
    ))}
    <PlaceLabel x="18" y="631">manský ostrov</PlaceLabel>
    <PlaceLabel x="983" y="743">zahrádkářská</PlaceLabel>
    <PlaceLabel x="951" y="783">osada Na Balkáně</PlaceLabel>
    <circle cx="120" cy="585" r="6" fill="#7b4a45" />
    <circle cx="1092" cy="696" r="6" fill="#7b4a45" />
    <ParkLabel x="1972" y="789">Smetanka</ParkLabel>
    <ParkLabel x="2941" y="513">Aloisov</ParkLabel>
    <Tree x={2053} y={733} />
    <Tree x={2999} y={457} />
    <RiverLabel transform="translate(2172 128) rotate(8)">Rokytka</RiverLabel>
    <RiverLabel transform="translate(70 94) rotate(86)">ltav</RiverLabel>

    <rect x="3123" y="70" width="72" height="36" rx="4" fill="#6478c0" />
    {shields.map(([text, x, y]) => (
      <g key={text + x}>
        <rect x={x - (text.length > 2 ? 36 : 27)} y={y - 18} width={text.length > 2 ? 72 : 54} height="36" rx="4" fill="#6478c0" stroke="#fff" strokeWidth="2" />
        <ShieldText x={x} y={y + 10}>{text}</ShieldText>
      </g>
    ))}
    {stations.map(([x, y]) => <Station key={x} x={x} y={y} />)}

    <path d={route} fill="none" stroke="#005596" strokeWidth="14" strokeLinejoin="round" strokeLinecap="round" />
    {kilometers.map(([text, x, y]) => (
      <g key={text + x}>
        <rect x={x + 3} y={y + 4} width="50" height="50" fill="#777" opacity=".5" />
        <rect x={x + 1} y={y + 1} width="50" height="50" fill="#efeff2" stroke="#b9b9b9" strokeWidth="3" />
        <MarkerText x={x + 26} y={y + 32}>{text}</MarkerText>
      </g>
    ))}
    <path d="M1646 801 H1652 L1670 825 L1652 849 H1646 Z" fill="#e8160c" />
    <rect x="1595" y="803" width="51" height="44" fill="#fff" stroke="#e8160c" strokeWidth="4" />
    <FlagText x="1620" y="835" fill="#e8160c">F</FlagText>
    <path d="M1660 841 L1637 864 L1660 888 Z" fill="#2e7d32" />
    <rect x="1661" y="842" width="50" height="44" fill="#fff" stroke="#2e7d32" strokeWidth="4" />
    <FlagText x="1686" y="874" fill="#2e7d32">S</FlagText>
  </MapSvg>
)

const PaceChart = () => (
  <ChartSvg viewBox="0 620 1364 288" role="img" aria-label="Pace chart">
    {paceParts.map((part) => (
      <g key={part.x} transform={`translate(0 580) scale(.33333) translate(${part.x} ${part.y})`}>
        <path d={part.d} fill="none" stroke="#4aa336" strokeWidth="3" strokeLinejoin="round" />
      </g>
    ))}
    <g fill="#4682b4" fillOpacity=".45">
      <rect x="43" y="729" width="1206" height="149" />
      {intervalStarts.map((x) => <rect key={x} x={x} y="660" width="9.5" height="69" />)}
    </g>
    <g fill="#4488bb" fillOpacity=".3">
      <rect x="43" y="744" width="1206" height="134" />
      {intervalStarts.map((x) => <rect key={x} x={x + 0.5} y="679" width="8.5" height="65" />)}
    </g>
    <path d="M40.500 635 V880.500 H1300 M1299.500 635 V878" fill="none" stroke="#8c8c8c" />
    {distanceTicks.map(([text, x]) => <TickText key={text} x={x} y="895">{text}</TickText>)}
    {paceTicks.map(([text, y]) => <PaceText key={text} x="1306" y={y}>{text}</PaceText>)}
  </ChartSvg>
)

const StatList = ({ rows }) => (
  <Stats>
    <tbody>
      {rows.map(([label, value, unit]) => (
        <tr key={label}>
          <StatLabel>{label}</StatLabel>
          <StatValue>{value} {unit && <Unit $small={unit.length > 3}>{unit}</Unit>}</StatValue>
        </tr>
      ))}
    </tbody>
  </Stats>
)

const App = () => {
  const [axis, setAxis] = useState('Time')
  const [smoothing, setSmoothing] = useState(16)
  const [tab, setTab] = useState('Laps')

  return (
    <>
      <GlobalStyle />
      <Window>
        <Header>
          <DateRow>
            <DateLink href="#date">THURSDAY 5 June, 2025</DateLink>
            <TimeButton>7:56 am <Caret /></TimeButton>
            <Badges>
              <Badge $color="#1a41ee">Fitness 44</Badge>
              <Badge $color="#e73a8c">Fatigue 48</Badge>
              <Badge $color="#ff6c00">Form 2</Badge>
            </Badges>
            <WindowTools>
              <IconButton aria-label="Collapse"><Collapse /></IconButton>
              <IconButton aria-label="Close"><Cross size={14} color="#54585e" /></IconButton>
            </WindowTools>
          </DateRow>
          <RepeatButton>Does not repeat <Caret $small /></RepeatButton>
          <SummaryRow>
            <WorkoutCard>
              <WorkoutTitle>Volný běh + 100m rovinka</WorkoutTitle>
              <WorkoutLine>
                <Shoe />
                <Figures>
                  <Figure>1:08:13</Figure>
                  <Check><MdCheck size={16} /></Check>
                  <Figure>13.7 <small>km</small></Figure>
                  <Figure $wide>90 <small>rTSS</small></Figure>
                </Figures>
                <Feeling>
                  <Smile />
                  <span>6</span>
                  <FeelingLine />
                  <FaComments size={16} />
                </Feeling>
              </WorkoutLine>
            </WorkoutCard>
            <Actions>
              <ActionButton $gap={14}><MdFileCopy size={15} />Files</ActionButton>
              <ActionButton $gap={5} $tight><BetaChart />Beta Charts</ActionButton>
              <ActionButton $gap={3}><FaThList size={16} />Summary</ActionButton>
            </Actions>
            <Shortcuts>
              <IconButton aria-label="Charts"><MdSignalCellularAlt size={20} /></IconButton>
              <IconButton aria-label="Comments"><MdModeComment size={18} /></IconButton>
              <IconButton aria-label="Map"><MdLandscape size={17} /></IconButton>
            </Shortcuts>
          </SummaryRow>
        </Header>

        <Body>
          <Main>
            <MapPanel>
              <MapBar>
                <IconButton aria-label="Close map"><Cross size={12} color="#bdbdc4" /></IconButton>
              </MapBar>
              <MapArea>
                <RouteMap />
                <ZoomControl>
                  <ZoomButton aria-label="Zoom in">+</ZoomButton>
                  <ZoomButton aria-label="Zoom out">−</ZoomButton>
                </ZoomControl>
                <LayersButton aria-label="Layers"><Layers /></LayersButton>
                <Attribution>
                  <a href="#mapbox">© Mapbox</a> <a href="#osm">© OpenStreetMap</a> <a href="#improve"><b>Improve this map</b></a>
                </Attribution>
                <MapGrip><Grip /></MapGrip>
              </MapArea>
            </MapPanel>

            <ChartControls>
              <AxisToggle>
                {['Time', 'Dist'].map((name) => (
                  <AxisButton key={name} $active={axis === name} onClick={() => setAxis(name)}>{name}</AxisButton>
                ))}
              </AxisToggle>
              <Slider type="range" aria-label="Smoothing" value={smoothing} onChange={(e) => setSmoothing(e.target.value)} />
              <PagerGroup>
                <PagerButton aria-label="Previous"><svg width="8" height="10" viewBox="0 0 8 10"><path d="M7 0 L0 5 L7 10 Z" fill="#fff" /></svg></PagerButton>
                <PagerButton aria-label="Next"><svg width="8" height="10" viewBox="0 0 8 10"><path d="M1 0 L8 5 L1 10 Z" fill="#fff" /></svg></PagerButton>
                <PagerButton $wide aria-label="Bars"><svg width="16" height="12" viewBox="0 0 16 12"><path d="M0 0 h3 v12 h-3 Z M4 5 h3 v7 h-3 Z M8 0 h3 v12 h-3 Z M12 4 h3 v8 h-3 Z" fill="#fff" /></svg></PagerButton>
              </PagerGroup>
              <MetricGroup>
                <MetricButton>RPM</MetricButton>
                <MetricButton>M</MetricButton>
                <MetricButton>BPM</MetricButton>
                <MetricButton>W</MetricButton>
                <MetricButton $active>MIN/KM</MetricButton>
              </MetricGroup>
            </ChartControls>
            <ChartArea>
              <PaceChart />
              <ChartGrip><Grip /></ChartGrip>
            </ChartArea>
          </Main>
          <Scrollbar><Thumb $height={188} /></Scrollbar>

          <Side>
            <Totals>
              <PanelBody>
                <PanelTitle>Entire Workout</PanelTitle>
                <BigStats>
                  <div>Duration<BigValue>1:08:13</BigValue></div>
                  <div>Distance<BigValue>13.7 <small>km</small></BigValue></div>
                  <div>TSS<BigValue>90</BigValue></div>
                </BigStats>
                <StatColumns>
                  <StatList rows={leftStats} />
                  <StatList rows={rightStats} />
                </StatColumns>
                <Rule />
                <RangeTable>
                  <thead>
                    <tr><th /><th>MIN</th><th>AVG</th><th>MAX</th><th /></tr>
                  </thead>
                  <tbody>
                    <tr><th>Power</th><td>74</td><td>289</td><td>455</td><td>W</td></tr>
                    <tr><th>Heart Rate</th><td>74</td><td>143</td><td>164</td><td>bpm</td></tr>
                  </tbody>
                </RangeTable>
              </PanelBody>
              <Scrollbar><Thumb $height={246} /></Scrollbar>
              <WideScrollbar><WideThumb /></WideScrollbar>
            </Totals>
            <Totals $grow>
              <PanelBody>
                <Tabs>
                  {panelTabs.map(([name, Icon, size]) => (
                    <TabButton key={name} aria-label={name} $active={tab === name} onClick={() => setTab(name)}>
                      <Icon size={size} />
                    </TabButton>
                  ))}
                </Tabs>
                <LapsTitle>Laps</LapsTitle>
                <LapRow $total>
                  <Checkbox type="checkbox" />
                  <LapName>Entire Workout</LapName>
                  <LapTime>1:08:13</LapTime>
                </LapRow>
                <LapList>
                  {laps.map((time, i) => (
                    <LapRow key={i}>
                      <Checkbox type="checkbox" />
                      <LapName>Lap #{i + 1}</LapName>
                      <LapTime>{time}</LapTime>
                    </LapRow>
                  ))}
                </LapList>
              </PanelBody>
              <Scrollbar><Thumb $height={134} /></Scrollbar>
            </Totals>
          </Side>
          <Scrollbar><Thumb $height={702} /></Scrollbar>
        </Body>

        <Footer>
          <PublicLabel><Checkbox type="checkbox" />Public</PublicLabel>
          <Share href="#twitter" aria-label="Twitter" $color="#8ccdf2"><FaTwitter size={15} /></Share>
          <Share href="#facebook" aria-label="Facebook" $color="#98b2c9"><FaFacebookF size={16} /></Share>
          <Share href="#link" aria-label="Link" $color="#8fc9d1"><FaLink size={12} /></Share>
          <Share href="#mail" aria-label="Mail" $color="#98e3c6">
            <svg width="13" height="9" viewBox="0 0 13 9"><path d="M0 0 H13 V9 H0 Z" fill="#fff" /><path d="M0 0 L6.500 5 L13 0 M0 9 L4 4 M13 9 L9 4" stroke="#98e3c6" fill="none" /></svg>
          </Share>
          <FooterActions>
            <TextButton>Delete</TextButton>
            <TextButton>Cancel</TextButton>
            <TextButton>Save</TextButton>
            <SaveButton>Save &amp; Close</SaveButton>
          </FooterActions>
        </Footer>
      </Window>
    </>
  )
}

const GlobalStyle = createGlobalStyle`
  * {
    box-sizing: border-box;
  }
  body {
    margin: 0;
    background: #1c1e2d;
    font-family: Inter, 'Liberation Sans', sans-serif;
    font-size: 12px;
    color: #20263a;
  }
  button {
    font-family: inherit;
    color: inherit;
    border: none;
    background: none;
    padding: 0;
    cursor: pointer;
  }
  svg {
    display: block;
    flex-shrink: 0;
  }
`

const Window = styled.div`
  height: 100vh;
  display: flex;
  flex-direction: column;
  background: #fff;
  border-radius: 10px 10px 4px 4px;
  overflow: hidden;
`

const Header = styled.header`
  position: relative;
  z-index: 1;
  padding: 0 16px 12px;
  background: #fff;
  box-shadow: 0 1px 3px #9a9aa8;
`

const DateRow = styled.div`
  display: flex;
  align-items: center;
  height: 49px;
`

const DateLink = styled.a`
  width: 198px;
  padding-left: 5px;
  font-size: 14px;
  color: #1a41ee;
  text-decoration: none;
`

const Caret = styled.span`
  border: 5px solid transparent;
  border-top: ${({ $small }) => ($small ? '5px' : '6px')} solid #1a41ee;
  border-bottom: none;
`

const TimeButton = styled.button`
  display: flex;
  gap: 10px;
  width: 140px;
  padding-left: 5px;
  font-size: 14px;
  line-height: 16px;

  ${Caret} {
    margin-top: 3px;
  }
`

const Badges = styled.div`
  display: flex;
  gap: 6px;
`

const Badge = styled.span`
  padding: 0 10px;
  border-radius: 3px;
  font-size: 12px;
  font-weight: 500;
  line-height: 25px;
  color: #fff;
  background: ${({ $color }) => $color};
`

const WindowTools = styled.div`
  display: flex;
  gap: 9px;
  margin-left: auto;
`

const IconButton = styled.button`
  color: #585c61;
`

const RepeatButton = styled.button`
  display: flex;
  align-items: center;
  gap: 16px;
  height: 20px;
  margin: 0 0 18px 12px;
  font-size: 12px;
`

const SummaryRow = styled.div`
  display: flex;
  align-items: flex-start;
`

const WorkoutCard = styled.section`
  width: 570px;
  height: 80px;
  padding: 10px 11px 0 16px;
  border-radius: 4px;
  background: #eff5ea;
`

const WorkoutTitle = styled.h1`
  margin: 0;
  font-size: 15px;
  line-height: 20px;
  font-weight: 600;
`

const WorkoutLine = styled.div`
  display: flex;
  align-items: center;
  margin-top: 7px;
`

const Figures = styled.div`
  display: flex;
  align-items: baseline;
  margin-left: 23px;
`

const Figure = styled.span`
  margin-left: ${({ $wide }) => ($wide ? '20px' : '0')};
  font-size: 23px;
  font-weight: 600;
  line-height: 26px;

  small {
    font-size: 16px;
  }
`

const Check = styled.span`
  align-self: flex-start;
  width: 20px;
  margin-top: -6px;
  color: #585c61;
`

const Feeling = styled.div`
  display: flex;
  align-items: center;
  gap: 3px;
  margin-left: auto;
  font-size: 13px;
`

const FeelingLine = styled.span`
  height: 21px;
  margin: 0 4px;
  border-left: 1px solid #20222f;
`

const Actions = styled.div`
  display: grid;
  grid-template-columns: 100%;
  gap: 5px;
  width: 92px;
  margin-left: 10px;
`

const ActionButton = styled.button`
  display: flex;
  align-items: center;
  gap: ${({ $gap }) => $gap}px;
  height: 32px;
  padding-left: ${({ $tight }) => ($tight ? '5px' : '8px')};
  border: 1px solid #1a41ee;
  border-radius: 3px;
  color: #1a41ee;
  font-size: 12px;
  white-space: nowrap;
`

const Shortcuts = styled.nav`
  display: flex;
  flex-direction: column;
  align-items: center;
  gap: 12px;
  height: 80px;
  margin-left: 10px;
  padding: 3px 0 0 18px;
  border-left: 1px solid #b8c6d8;
`

const Body = styled.main`
  flex: 1;
  min-height: 0;
  display: flex;
`

const Main = styled.div`
  flex: 1;
  min-width: 0;
  overflow: hidden;
  background: #fff;
`

const MapPanel = styled.section`
  margin: 10px 16px 0 12px;
  border: 1px solid #a3aec4;
`

const MapBar = styled.div`
  display: flex;
  justify-content: flex-end;
  align-items: center;
  height: 22px;
  padding-right: 5px;
`

const MapArea = styled.div`
  position: relative;
`

const MapSvg = styled.svg`
  width: 100%;
  height: 318px;
`

const StreetLabel = styled.text`
  font-family: Roboto, 'Liberation Sans', sans-serif;
  font-weight: 400;
  fill: #3c3f45;
  stroke: #fff;
  stroke-width: 4px;
  paint-order: stroke;
`

const DistrictLabel = styled(StreetLabel)`
  fill: #6470a3;
  letter-spacing: ${({ $spacing }) => $spacing}px;
`

const PlaceLabel = styled(StreetLabel)`
  font-size: 35px;
  font-weight: 500;
  fill: #855a55;
`

const ParkLabel = styled(StreetLabel)`
  font-size: 36px;
  font-weight: 500;
  fill: #3c8638;
`

const RiverLabel = styled(StreetLabel)`
  font-size: 35px;
  font-weight: 500;
  font-style: italic;
  fill: #3f66c9;
  stroke: none;
`

const ShieldText = styled.text`
  font-family: Roboto, 'Liberation Sans', sans-serif;
  font-size: 28px;
  font-weight: 700;
  text-anchor: middle;
  fill: #fff;
`

const MarkerText = styled.text`
  font-family: 'Liberation Sans', sans-serif;
  font-size: 27px;
  text-anchor: middle;
  fill: #1522e6;
`

const FlagText = styled.text`
  font-family: 'Liberation Sans', sans-serif;
  font-size: 31px;
  font-weight: 700;
  text-anchor: middle;
`

const ZoomControl = styled.div`
  position: absolute;
  top: 14px;
  left: 10px;
  width: 23px;
  background: #fff;
  box-shadow: 0 1px 2px #999;
`

const ZoomButton = styled.button`
  display: block;
  width: 100%;
  height: 23px;
  font-size: 18px;
  font-weight: 200;
  line-height: 18px;
  color: #888;

  & + & {
    border-top: 1px solid #ccc;
  }
`

const LayersButton = styled.button`
  position: absolute;
  top: 14px;
  right: 10px;
  padding: 4px;
  background: #fff;
  box-shadow: 0 1px 2px #999;
`

const Attribution = styled.div`
  position: absolute;
  right: 0;
  bottom: 18px;
  padding: 0 5px;
  background: rgba(255, 255, 255, 0.5);
  font: 12px/20px 'Liberation Sans', sans-serif;

  a {
    color: #404040;
    text-decoration: none;
  }
`

const MapGrip = styled.span`
  position: absolute;
  right: 4px;
  bottom: 4px;
`

const ChartControls = styled.div`
  display: flex;
  align-items: flex-start;
  height: 22px;
  margin: 41px 27px 0 23px;
`

const AxisToggle = styled.div`
  display: flex;
`

const AxisButton = styled.button`
  width: ${({ $active }) => ($active ? '44px' : '43px')};
  height: 22px;
  border: 1px solid ${({ $active }) => ($active ? '#8d92a0' : '#d6d8e4')};
  font-size: 12px;
  font-weight: ${({ $active }) => ($active ? 500 : 400)};
  color: ${({ $active }) => ($active ? '#fff' : '#c2c4cc')};
  background: ${({ $active }) => ($active ? 'linear-gradient(#85827f, #4a4a4a)' : '#fafafa')};
`

const Slider = styled.input`
  appearance: none;
  width: 137px;
  height: 7px;
  margin: 5px 0 0 17px;
  border: 1px solid #9b9b9b;
  border-right-color: #dde0e8;
  border-bottom-color: #dde0e8;
  background: #fff;

  &::-webkit-slider-thumb {
    appearance: none;
    width: 12px;
    height: 22px;
    border: 1px solid #d6dae4;
    background: linear-gradient(#fff, #e6e6e6);
  }
`

const PagerGroup = styled.div`
  display: flex;
  gap: 1px;
  margin-left: auto;
`

const PagerButton = styled.button`
  display: grid;
  place-items: center;
  width: ${({ $wide }) => ($wide ? '44px' : '30px')};
  height: 22px;
  background: #2e74ff;
`

const MetricGroup = styled.div`
  display: flex;
  margin-left: 10px;
`

const MetricButton = styled.button`
  width: ${({ $active }) => ($active ? '54px' : '43px')};
  height: 22px;
  border: 1px solid #d2d4de;
  border-right-width: ${({ $active }) => ($active ? '1px' : '0')};
  font-size: 12px;
  font-weight: ${({ $active }) => ($active ? 500 : 400)};
  color: ${({ $active }) => ($active ? '#fff' : '#c2c4cc')};
  background: ${({ $active }) => ($active ? 'linear-gradient(#12ab00, #138000)' : 'linear-gradient(#fff, #efefef)')};
`

const ChartArea = styled.div`
  position: relative;
`

const ChartSvg = styled.svg`
  width: 100%;
  height: auto;
`

const TickText = styled.text`
  font-size: 9px;
  font-weight: 500;
  text-anchor: middle;
  fill: #20263a;
`

const PaceText = styled.text`
  font-size: 11px;
  font-weight: 500;
  fill: #14851a;
`

const ChartGrip = styled.span`
  position: absolute;
  right: 22px;
  bottom: 8px;
`

const Scrollbar = styled.div`
  width: 12px;
  padding: 3px;
  background: #efefef;
`

const Thumb = styled.div`
  height: ${({ $height }) => $height}px;
  max-height: 100%;
  border-radius: 3px;
  background: #cacaca;
`

const Side = styled.aside`
  width: 323px;
  display: flex;
  flex-direction: column;
`

const Totals = styled.section`
  display: grid;
  grid-template-columns: 1fr 12px;
  ${({ $grow }) => $grow && 'flex: 1; min-height: 0;'}
  border-top: 1px solid #b8c6d8;
`

const PanelBody = styled.div`
  min-width: 0;
  overflow: hidden;
  background: #fff;
`

const WideScrollbar = styled.div`
  grid-column: 1 / -1;
  height: 12px;
  padding: 3px 17px 3px 3px;
  background: #efefef;
`

const WideThumb = styled.div`
  height: 6px;
  border-radius: 3px;
  background: #cacaca;
`

const PanelTitle = styled.h2`
  margin: 0;
  padding-top: 14px;
  height: 45px;
  font-size: 20px;
  font-weight: 200;
  line-height: 28px;
  text-align: center;

  &::after {
    content: '';
    display: block;
    height: 8px;
    margin-top: 3px;
    background: radial-gradient(50% 100% at 50% 0, #cfcfcf, #fff);
  }
`

const BigStats = styled.div`
  display: flex;
  gap: 32px;
  padding: 20px 0 0 31px;
  line-height: 16px;
  font-size: 11px;
  text-align: center;
`

const BigValue = styled.div`
  font-size: 25px;
  font-weight: 200;
  line-height: 22px;

  small {
    font-size: 14px;
    font-weight: 400;
  }
`

const StatColumns = styled.div`
  display: grid;
  grid-template-columns: 163px 1fr;
  margin-top: 15px;
`

const Stats = styled.table`
  table-layout: fixed;
  border-collapse: collapse;
  width: 148px;
  font-size: 11px;
`

const StatLabel = styled.th`
  width: 80px;
  height: 21px;
  padding: 0 10px 0 0;
  border-right: 1px solid #b3c6d8;
  font-weight: 400;
  text-align: right;
`

const StatValue = styled.td`
  padding: 0 0 0 9px;
  white-space: nowrap;
`

const Unit = styled.span`
  font-size: ${({ $small }) => ($small ? '7px' : '10px')};
`

const Rule = styled.hr`
  margin: 18px 10px 16px;
  border: none;
  border-top: 1px solid #b3c6d8;
`

const RangeTable = styled.table`
  width: 100%;
  table-layout: fixed;
  border-collapse: collapse;
  font-size: 12px;
  line-height: 25px;
  text-align: center;

  th {
    height: 25px;
    padding: 0;
    font-size: 11px;
    font-weight: 400;
  }

  thead th {
    height: 23px;
    line-height: 23px;
  }

  td {
    padding: 0;
  }

  tbody tr {
    vertical-align: top;
  }

  tbody tr:last-child {
    height: 32px;
  }

  th:first-child {
    width: 80px;
    padding-right: 10px;
    text-align: right;
  }

  tbody th:first-child {
    border-right: 1px solid #b3c6d8;
  }

  td:last-child,
  th:last-child {
    width: 69px;
    padding-left: 8px;
    text-align: left;
    font-size: 10px;
  }

  td:last-child {
    border-left: 1px solid #b3c6d8;
  }
`

const Tabs = styled.div`
  display: flex;
  gap: 10px;
  padding: 15px 0 0 35px;
`

const TabButton = styled.button`
  display: grid;
  place-items: center;
  width: 36px;
  height: 36px;
  flex-shrink: 0;
  border-radius: 4px;
  color: #585c61;
  background: ${({ $active }) => ($active ? '#ececec' : 'none')};
`

const LapsTitle = styled.h3`
  margin: 8px 0 15px 24px;
  font-size: 16px;
  font-weight: 400;
  line-height: 20px;
  text-align: center;
`

const LapList = styled.div`
  padding-top: 7px;
`

const LapRow = styled.label`
  display: grid;
  grid-template-columns: 23px 143px 1fr;
  align-items: start;
  height: ${({ $total }) => ($total ? '26px' : '28px')};
  padding-left: 10px;
  border-bottom: ${({ $total }) => ($total ? '1px solid #b3c0dc' : 'none')};

  ${LapList} &:nth-child(even) {
    height: 27px;
  }
`

const Checkbox = styled.input`
  width: 14px;
  height: 14px;
  margin: 2px 0 0;
`

const LapName = styled.span`
  font-size: 12px;
  line-height: 24px;
`

const LapTime = styled.span`
  font-size: 14px;
  line-height: 22px;
`

const Footer = styled.footer`
  display: flex;
  align-items: center;
  gap: 5px;
  height: 54px;
  padding: 0 16px 0 22px;
  border-top: 1px solid #dde1e8;
`

const PublicLabel = styled.label`
  display: flex;
  align-items: center;
  gap: 4px;
  margin-right: 1px;
  padding-top: 13px;
  font-size: 12px;

  ${Checkbox} {
    margin: 0;
  }
`

const Share = styled.a`
  display: grid;
  place-items: center;
  width: 21px;
  height: 21px;
  margin-top: 10px;
  color: #fff;
  background: ${({ $color }) => $color};
`

const FooterActions = styled.div`
  display: flex;
  align-items: center;
  gap: 38px;
  margin: 4px 0 0 auto;
`

const TextButton = styled.button`
  font-size: 14px;
  color: #1a41ee;
`

const SaveButton = styled.button`
  height: 32px;
  margin-left: -16px;
  padding: 0 15px;
  border-radius: 3px;
  font-size: 14px;
  font-weight: 500;
  color: #fff;
  background: #1a41ee;
`

export default App
